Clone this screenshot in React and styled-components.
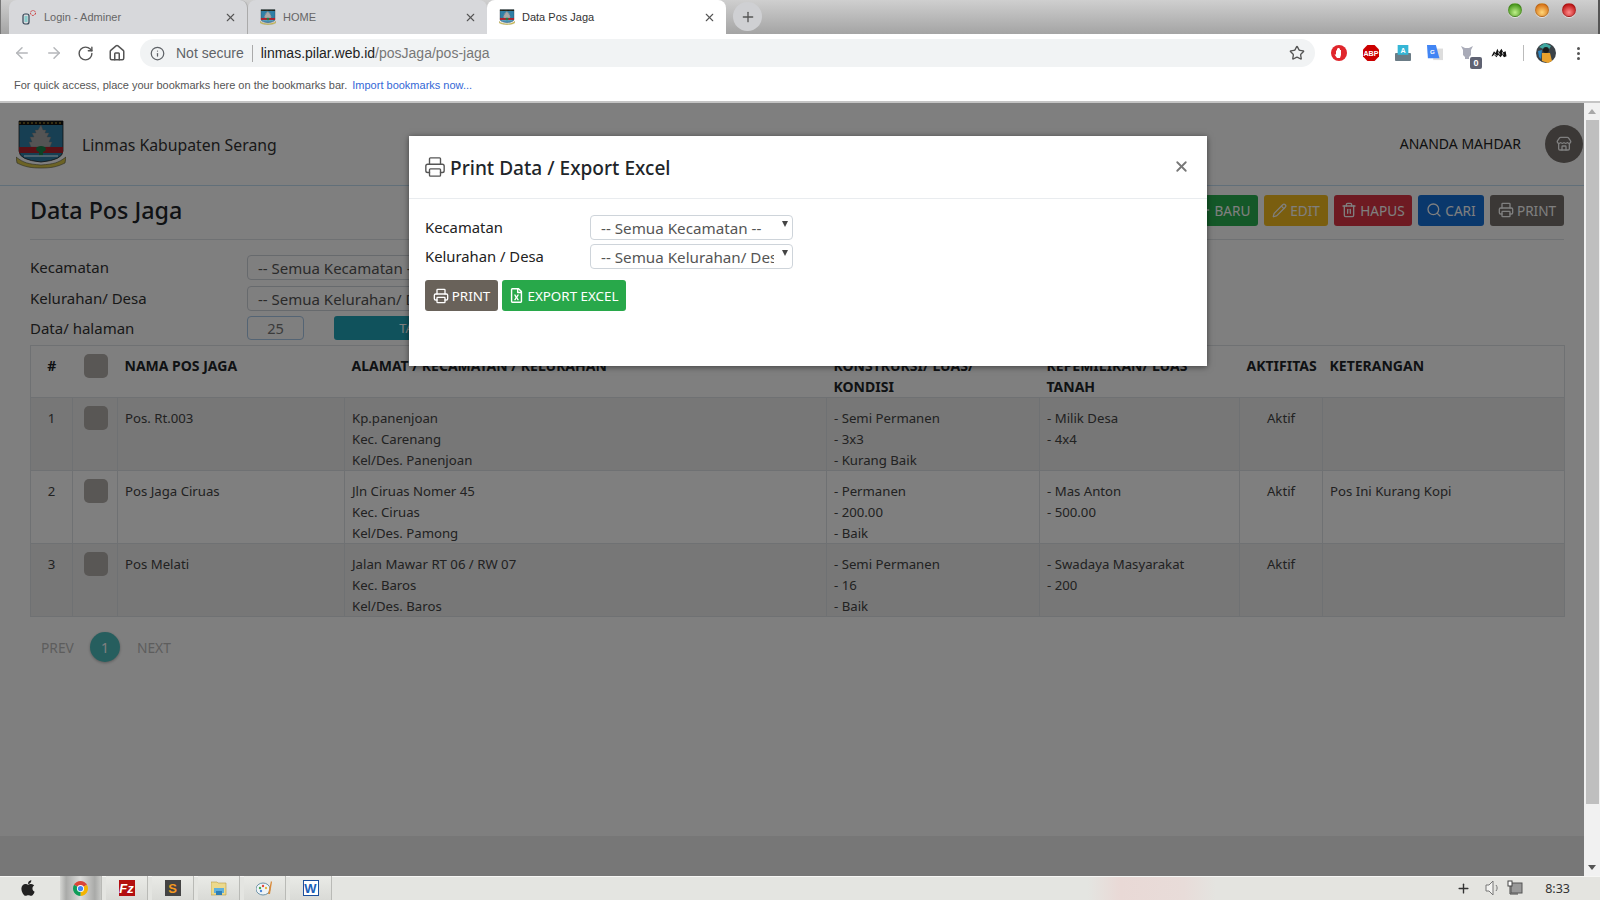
import React from 'react';
import styled, { createGlobalStyle } from 'styled-components';
import { ArrowLeft, ArrowRight, RotateCw, House, Info, Star, Plus, X, Printer, Pencil, Trash2, Search, Store } from 'lucide-react';
import { FaApple, FaRegFileExcel } from 'react-icons/fa';

const Global = createGlobalStyle`
  html, body { margin: 0; padding: 0; height: 100%; overflow: hidden; background: #fff; }
  * { box-sizing: border-box; }
  body { font-family: "Noto Sans", "Open Sans", sans-serif; color: #212529; }
`;
const UI = `"Liberation Sans", Arial, sans-serif`;

const Screen = styled.div`width: 1600px; height: 900px; display: flex; flex-direction: column; overflow: hidden;`;

/* Browser chrome */
const TabStrip = styled.div`height: 34px; display: flex; padding-left: 8px; background: linear-gradient(#cfcfcf, #a4a4a4); border-right: 2px solid #555; border-left: 1px solid #777; flex: none;`;
const Tab = styled.div`
  width: 239px; height: 34px; display: flex; align-items: center; padding: 0 10px 0 12px; gap: 7px;
  font: 11px ${UI}; color: ${p => p.$active ? '#333' : '#666'};
  background: ${p => p.$active ? '#fff' : '#d7d8db'};
  border-radius: 8px 8px 0 0;
  border-right: ${p => p.$divided ? '1px solid #aaa' : '0'};
  svg.close { margin-left: auto; color: #555; }
`;
const TabTitle = styled.span`flex: 1;`;
const NewTab = styled.div`width: 29px; height: 29px; margin: 2px 0 0 7px; border-radius: 50%; background: #cfd0d3; display: flex; align-items: center; justify-content: center; color: #555;`;
const Lights = styled.div`margin-left: auto; display: flex; gap: 13px; padding: 3px 22px 0 0;`;
const Light = styled.span`width: 14px; height: 14px; border-radius: 50%; background: radial-gradient(circle at 50% 70%, ${p => p.$a}, ${p => p.$b} 75%); border: 1px solid rgba(0,0,0,.15); box-shadow: 0 1px 0 rgba(255,255,255,.6);`;

const ToolBar = styled.div`height: 35px; background: #fff; display: flex; align-items: center; flex: none; padding-top: 3px;`;
const NavButtons = styled.div`width: 140px; flex: none; display: flex; align-items: center; gap: 14px; padding-left: 13px; color: #5f6368;`;
const NavIcon = styled.span`display: flex; color: ${p => p.$off ? '#b5b7ba' : '#555'};`;
const Omnibox = styled.div`width: 1175px; height: 28px; border-radius: 14px; background: #f1f3f4; display: flex; align-items: center; padding: 0 10px; font: 14px ${UI}; color: #5f6368;`;
const Secure = styled.span`margin-left: 11px; padding-right: 8px; border-right: 1px solid #aaa; line-height: 17px; font-size: 14px;`;
const Host = styled.span`margin-left: 8px; color: #222;`;
const UrlPath = styled.span`color: #777;`;
const OmniStar = styled.span`margin-left: auto; display: flex; color: #555;`;
const Extensions = styled.div`flex: 1; display: flex; align-items: center; position: relative; height: 28px; padding-left: 12px; gap: 8px;`;
const Ext = styled.span`width: 24px; height: 24px; display: flex; align-items: center; justify-content: center; position: relative;`;
const Badge = styled.span`position: absolute; right: -3px; bottom: -4px; width: 12px; height: 12px; border-radius: 2px; background: #5f6272; color: #fff; font: bold 9px/12px ${UI}; text-align: center;`;
const ExtDivider = styled.span`width: 1px; height: 16px; background: #bbb; margin-left: 4px; margin-right: 2px;`;
const Dots = styled.span`display: flex; flex-direction: column; gap: 2px; margin-left: 11px;`;
const Dot = styled.i`width: 3px; height: 3px; border-radius: 50%; background: #555; display: block;`;

const BookmarkBar = styled.div`height: 34px; background: #fff; border-bottom: 2px solid #c4c4c4; font: 11px ${UI}; color: #555; padding: 10px 0 0 14px; flex: none;`;
const BookmarkLink = styled.span`color: #3367d6; margin-left: 2px;`;

/* Page */
const PageArea = styled.div`flex: 1; min-height: 0; display: flex;`;
const Main = styled.div`flex: 1; min-width: 0; position: relative; display: flex; flex-direction: column; background: #fff;`;
const Scrollbar = styled.div`width: 16px; flex: none; background: #f1f1f1; display: flex; flex-direction: column; align-items: center; color: #888;`;
const ScrollArrow = styled.span`height: 17px; width: 16px; display: flex; align-items: center; justify-content: center;`;
const ArrowUp = styled.i`width: 0; height: 0; border: 4px solid transparent; border-top: 0; border-bottom: 5px solid #a8a8a8;`;
const ArrowDown = styled.i`width: 0; height: 0; border: 4px solid transparent; border-bottom: 0; border-top: 5px solid #555;`;
const Thumb = styled.div`width: 13px; height: 684px; background: #bfbfbf;`;
const ScrollSpace = styled.div`flex: 1;`;

const SiteHeader = styled.header`height: 83px; flex: none; display: flex; align-items: center; padding: 0 1px 0 16px; border-bottom: 1px solid #c3dff2;`;
const Brand = styled.span`margin: 2px 0 0 16px; font-size: 15.8px; color: #333;`;
const UserName = styled.span`margin: -2px 24px 0 auto; font-size: 14px; color: #222;`;
const Avatar = styled.span`width: 38px; height: 38px; border-radius: 50%; background: #76706c; color: #fff; display: flex; align-items: center; justify-content: center;`;

const Content = styled.div`flex: 1; padding: 0 20px 0 30px;`;
const TitleRow = styled.div`height: 54px; display: flex; align-items: center; gap: 6px; border-bottom: 1px solid #dee2e6;`;
const Title = styled.h1`margin: 0 auto 5px 0; font-size: 23.3px; font-weight: 500; color: #212529;`;
const Action = styled.button`
  height: 31px; border: 0; border-radius: 3px; padding: 0; margin-bottom: 5px;
  background: ${p => p.$bg}; color: ${p => p.$fg || '#fff'};
  display: inline-flex; align-items: center; justify-content: center; gap: 3px;
  font: 13.6px "Noto Sans", sans-serif; white-space: nowrap;
  width: ${p => p.$w}px;
`;
const FilterRow = styled.div`display: flex; align-items: center; height: ${p => p.$h}px; margin-top: ${p => p.$mt}px; gap: 30px;`;
const FilterLabel = styled.label`width: 217px; margin: ${p => p.$up ? '-2px' : '0'} -30px 0 0; flex: none; font-size: 15px; color: #333;`;
const FilterSelect = styled.div`width: 420px; height: 100%; border: 1px solid #ced4da; border-radius: 4px; color: #555; font-size: 15px; padding: 0 10px; display: flex; align-items: center;`;
const PerPage = styled.div`width: 57px; height: 100%; border: 1px solid #a8c8e8; border-radius: 4px; color: #777; font-size: 14.6px; display: flex; align-items: center; justify-content: center;`;
const ShowButton = styled.div`width: 202px; height: 100%; background: #20a4b8; color: #fff; border-radius: 3px; font-size: 13px; display: flex; align-items: center; justify-content: center;`;

const Table = styled.table`width: 1534px; table-layout: fixed; border-collapse: collapse; margin-top: 5px; font-size: 13.2px; color: #444; border: 1px solid #dee2e6;`;
const Th = styled.th`height: 51px; padding: 9px 7px 0; text-align: ${p => p.$center ? 'center' : 'left'}; vertical-align: top; font-weight: 700; font-size: 14px; line-height: 21px; color: #212529;`;
const Row = styled.tr`background: ${p => p.$odd ? '#eee' : 'transparent'}; height: 73px;`;
const Td = styled.td`padding: 10px 7px 0; border: 1px solid #dee2e6; vertical-align: top; line-height: 21px; height: 72px; text-align: ${p => p.$center ? 'center' : 'left'}; overflow: hidden;`;
const Line = styled.div`white-space: nowrap; &:last-child { margin-bottom: -1px; }`;
const Check = styled.span`display: block; width: 24px; height: 24px; margin: ${p => p.$head ? '-1px' : '-2px'} 0 0 4px; border-radius: 5px; background: #b3aeaa;`;

const Pager = styled.div`display: flex; align-items: center; height: 30px; margin: 15px 0 0 11px; font-size: 13.8px; color: #bbb;`;
const PageDot = styled.span`width: 30px; height: 30px; border-radius: 50%; background: #4dbdbd; color: #fff; display: flex; align-items: center; justify-content: center; margin: 0 17px 0 16px; box-shadow: 0 1px 3px rgba(0,0,0,.3);`;
const Footer = styled.footer`height: 40px; background: #eee; flex: none;`;

/* Modal */
const Backdrop = styled.div`position: absolute; inset: 0; background: rgba(0,0,0,.5);`;
const Modal = styled.div`position: absolute; left: 409px; top: 33px; width: 798px; height: 230px; background: #fff; box-shadow: 0 1px 6px rgba(0,0,0,.5);`;
const ModalHead = styled.div`height: 63px; display: flex; align-items: center; padding: 0 17px 0 15px; border-bottom: 1px solid #e9ecef; gap: 4px; color: #555;`;
const ModalTitle = styled.h2`margin: 2px 0 0; font-size: 19.1px; font-weight: 500; color: #212529;`;
const CloseX = styled.span`margin: -2px 0 0 auto; color: #777; display: flex;`;
const ModalBody = styled.div`padding: 16px 16px 0;`;
const FormRow = styled.div`display: flex; align-items: center; height: 25px; margin-bottom: 4px;`;
const FormLabel = styled.label`width: 165px; margin-top: -2px; flex: none; font-size: 14.8px; color: #222;`;
const SelectWrap = styled.div`
  position: relative; width: 203px; height: 25px;
  &::after { content: ''; position: absolute; right: 5px; top: 6px; border: 3.5px solid transparent; border-bottom: 0; border-top: 6px solid #444; pointer-events: none; }
`;
const Select = styled.select`
  width: 100%; height: 100%; appearance: none; border: 1px solid #ced4da; border-radius: 4px; background: #fff;
  color: #555; font: 15.2px "Noto Sans", sans-serif; padding: 0 18px 0 10px; outline: 0;
`;
const ModalActions = styled.div`display: flex; gap: 4px; margin-top: 11px;`;
const ModalButton = styled.button`
  height: 31px; width: ${p => p.$w}px; border: 0; border-radius: 3px; background: ${p => p.$bg}; color: #fff;
  display: inline-flex; align-items: center; justify-content: center; gap: 3px; font: 13.4px "Noto Sans", sans-serif; padding: 0;
`;

/* Taskbar */
const Taskbar = styled.div`height: 24px; flex: none; display: flex; align-items: stretch; background: linear-gradient(90deg, #e4e5e1 0 68%, #e9d9d6 70%, #e8dcd9 74%, #e4e4e0 76%); box-shadow: inset 0 1px 0 #f6f6f4;`;
const StartCell = styled.div`width: 60px; padding-right: 4px; display: flex; align-items: center; justify-content: center; color: #222;`;
const TaskCell = styled.div`
  width: 42px; margin-right: 4px; display: flex; align-items: center; justify-content: center;
  background: ${p => p.$on ? 'linear-gradient(90deg,#d5d6d3,#a9aaa8 15%,#dcdcda 50%,#a9aaa8 85%,#c8c9c6)' : 'linear-gradient(#eaebe7,#d9dad6)'};
  border-right: 1px solid #b9bab6;
`;
const Tray = styled.div`margin-left: auto; display: flex; align-items: center; padding-right: 30px; color: #333;`;
const Clock = styled.span`font-size: 12.5px; margin-left: 22px; color: #333;`;
const TrayIcon = styled.span`display: flex; margin-left: ${p => p.$ml || 0}px;`;

const Crest = ({ size = 50 }) => (
  <svg width={size} height={size} viewBox="0 0 50 50" style={{ flex: 'none' }}>
    <path d="M3 2h44v30q0 9-22 11Q3 41 3 32z" fill="#2f7fa6" stroke="#222" strokeWidth=".8" />
    <rect x="3" y="2" width="44" height="4" fill="#111" />
    <path d="M3 4h44" stroke="#c9a93a" strokeDasharray="2 2" strokeWidth="1" />
    <path d="M25 6l2 5h3l-1 3h4l-2 4h4l-2 5h3l-2 5H15l-2-5h3l-2-5h4l-2-4h4l-1-3h3z" fill="#a8a8a8" stroke="#777" strokeWidth=".4" />
    <rect x="3" y="28" width="44" height="6" fill="#b3202a" />
    <path d="M25 27c5 0 7 4 2 6v4h-4v-4c-5-2-3-6 2-6z" fill="#17824a" />
    <path d="M8 37h34" stroke="#bde" strokeWidth="1.500" />
    <path d="M0 38c8 6 12 7 25 8 13-1 17-2 25-8l-1 6c-8 4-14 5-24 5S9 48 1 44z" fill="#d8c64a" stroke="#554" strokeWidth=".6" />
  </svg>
);

const Hand = () => (
  <svg width="16" height="16" viewBox="0 0 16 16"><circle cx="8" cy="8" r="8" fill="#e0262c" /><path d="M5 5.500h1V3.500h1V3h1v.5h1V5h1v5l-1 3H6L3.500 9.500 5 9.500z" fill="#fff" /></svg>
);
const Abp = () => (
  <svg width="16" height="16" viewBox="0 0 18 18"><path d="M5 0h8l5 5v8l-5 5H5l-5-5V5z" fill="#c00" /><text x="9" y="12" textAnchor="middle" fontFamily="Liberation Sans" fontWeight="bold" fontSize="8" fill="#fff">ABP</text></svg>
);
const Keys = () => (
  <svg width="16" height="16" viewBox="0 0 18 18"><rect y="9" width="18" height="9" rx="1" fill="#6b7c86" /><rect x="3" y="0" width="12" height="11" fill="#35b6d6" /><text x="9" y="9" textAnchor="middle" fontFamily="Liberation Sans" fontWeight="bold" fontSize="8" fill="#fff">A</text></svg>
);
const Translate = () => (
  <svg width="16" height="16" viewBox="0 0 18 18"><rect x="7" y="4" width="11" height="13" fill="#ddd" /><path d="M0 0h10l4 15H1z" fill="#4285f4" /><text x="6" y="10" textAnchor="middle" fontFamily="Liberation Sans" fontWeight="bold" fontSize="7" fill="#fff">G</text></svg>
);
const Bats = () => (
  <svg width="16" height="10" viewBox="0 0 18 12"><path d="M0 10l3-6 2 2 2-5 2 4 3-4 2 4 3-1 1 6-3 1-2-3-2 3-3-3-2 3-3-3-2 2z" fill="#111" /><path d="M3 7l3 2M8 5l2 3M13 5l1 3" stroke="#fff" /></svg>
);
const Parrot = () => (
  <svg width="20" height="20" viewBox="0 0 20 20"><circle cx="10" cy="10" r="10" fill="#3a4248" /><path d="M3 4l6-4 6 3-3 5z" fill="#3fa7a0" /><path d="M6 10h8l2 8-4 2-6-2z" fill="#e8a12d" /><path d="M2 8l4-1-1 9-2-2z" fill="#2e86c1" /><circle cx="10" cy="7" r="3" fill="#1c1c1c" /></svg>
);
const ChromeLogo = () => (
  <svg width="15" height="15" viewBox="0 0 16 16"><path d="M8 8L1.100 4A8 8 0 0 1 14.900 4z" fill="#db4437" /><path d="M8 8l6.900-4A8 8 0 0 1 8 16z" fill="#f4b400" /><path d="M8 8v8A8 8 0 0 1 1.100 4z" fill="#0f9d58" /><circle cx="8" cy="8" r="3.800" fill="#fff" /><circle cx="8" cy="8" r="2.800" fill="#4285f4" /></svg>
);
const Square = styled.span`width: 16px; height: 16px; display: flex; align-items: center; justify-content: center; background: ${p => p.$bg}; color: ${p => p.$fg}; font: ${p => p.$font}; border: ${p => p.$border || '0'};`;
const Folder = () => (
  <svg width="16" height="16" viewBox="0 0 16 16"><path d="M0 2h6l1 1h8v12H0z" fill="#ecd98b" stroke="#b89b45" strokeWidth=".6" /><rect x="3" y="8" width="10" height="5" fill="#5fb0dc" /><rect x="5" y="11" width="6" height="4" fill="#2f7fb5" /></svg>
);
const Palette = () => (
  <svg width="18" height="16" viewBox="0 0 18 16"><ellipse cx="7" cy="9" rx="7" ry="6" fill="#eef3f6" stroke="#6d93a8" /><circle cx="4" cy="8" r="1.200" fill="#4aa84a" /><circle cx="7" cy="6" r="1.200" fill="#e2453a" /><circle cx="10" cy="8" r="1.200" fill="#e9b73f" /><circle cx="5" cy="11" r="1.200" fill="#4a86d8" /><path d="M15 1l1 1-2 12h-2z" fill="#d98a3a" /></svg>
);
const Speaker = () => (
  <svg width="14" height="16" viewBox="0 0 14 16" fill="#f2f2f0" stroke="#777"><path d="M1 5h3l4-4v14l-4-4H1z" /><path d="M11 5c1.500 2 1.500 4 0 6" fill="none" /></svg>
);
const Network = () => (
  <svg width="16" height="16" viewBox="0 0 16 16"><rect x="4" y="3" width="11" height="10" fill="#999" stroke="#555" /><rect x="1" y="1" width="4" height="5" fill="#fff" stroke="#444" /><path d="M3 6v8h8" fill="none" stroke="#444" /></svg>
);

const rows = [
  { no: 1, name: 'Pos. Rt.003', addr: ['Kp.panenjoan', 'Kec. Carenang', 'Kel/Des. Panenjoan'], kons: ['- Semi Permanen', '- 3x3', '- Kurang Baik'], own: ['- Milik Desa', '- 4x4'], note: '' },
  { no: 2, name: 'Pos Jaga Ciruas', addr: ['Jln Ciruas Nomer 45', 'Kec. Ciruas', 'Kel/Des. Pamong'], kons: ['- Permanen', '- 200.00', '- Baik'], own: ['- Mas Anton', '- 500.00'], note: 'Pos Ini Kurang Kopi' },
  { no: 3, name: 'Pos Melati', addr: ['Jalan Mawar RT 06 / RW 07', 'Kec. Baros', 'Kel/Des. Baros'], kons: ['- Semi Permanen', '- 16', '- Baik'], own: ['- Swadaya Masyarakat', '- 200'], note: '' },
];
const Lines = ({ items }) => items.map(t => <Line key={t}>{t}</Line>);

export default function App() {
  return (
    <Screen>
      <Global />
      <TabStrip>
        <Tab $divided>
          <svg width="16" height="16" viewBox="0 0 16 16" style={{ flex: 'none' }}><rect x="2" y="5" width="6" height="10" rx="2" fill="none" stroke="#345" strokeWidth="1.200" /><rect x="3.500" y="7" width="3" height="6" fill="#8cc" /><circle cx="12" cy="4" r="2.500" fill="none" stroke="#c33" strokeDasharray="2 1" /></svg>
          <TabTitle>Login - Adminer</TabTitle>
          <X className="close" size={13} />
        </Tab>
        <Tab>
          <Crest size={16} />
          <TabTitle>HOME</TabTitle>
          <X className="close" size={13} />
        </Tab>
        <Tab $active>
          <Crest size={16} />
          <TabTitle>Data Pos Jaga</TabTitle>
          <X className="close" size={13} />
        </Tab>
        <NewTab><Plus size={16} /></NewTab>
        <Lights>
          <Light $a="#bff08a" $b="#4c9a20" />
          <Light $a="#ffd77a" $b="#d9761a" />
          <Light $a="#ff8a8a" $b="#c01818" />
        </Lights>
      </TabStrip>

      <ToolBar>
        <NavButtons>
          <NavIcon $off><ArrowLeft size={18} /></NavIcon>
          <NavIcon $off><ArrowRight size={18} /></NavIcon>
          <NavIcon><RotateCw size={17} /></NavIcon>
          <NavIcon><House size={18} /></NavIcon>
        </NavButtons>
        <Omnibox>
          <Info size={15} />
          <Secure>Not secure</Secure>
          <Host>linmas.pilar.web.id<UrlPath>/posJaga/pos-jaga</UrlPath></Host>
          <OmniStar><Star size={16} /></OmniStar>
        </Omnibox>
        <Extensions>
          <Ext><Hand /></Ext>
          <Ext><Abp /></Ext>
          <Ext><Keys /></Ext>
          <Ext><Translate /></Ext>
          <Ext>
            <svg width="16" height="16" viewBox="0 0 16 16"><path d="M2 1l4 2h4l4-2-2 4v5l-2 2v2H6v-2l-2-2V5z" fill="#a9abb8" /></svg>
            <Badge>0</Badge>
          </Ext>
          <Ext><Bats /></Ext>
          <ExtDivider />
          <Ext><Parrot /></Ext>
          <Dots><Dot /><Dot /><Dot /></Dots>
        </Extensions>
      </ToolBar>

      <BookmarkBar>
        For quick access, place your bookmarks here on the bookmarks bar. <BookmarkLink>Import bookmarks now...</BookmarkLink>
      </BookmarkBar>

      <PageArea>
        <Main>
          <SiteHeader>
            <Crest />
            <Brand>Linmas Kabupaten Serang</Brand>
            <UserName>ANANDA MAHDAR</UserName>
            <Avatar><Store size={16} /></Avatar>
          </SiteHeader>
          <Content>
            <TitleRow>
              <Title>Data Pos Jaga</Title>
              <Action $bg="#28b050" $w={70}><Plus size={16} />BARU</Action>
              <Action $bg="#f5bd1f" $w={64}><Pencil size={15} />EDIT</Action>
              <Action $bg="#dc3545" $w={78}><Trash2 size={16} />HAPUS</Action>
              <Action $bg="#1470d8" $w={66}><Search size={16} />CARI</Action>
              <Action $bg="#76706c" $w={74}><Printer size={16} />PRINT</Action>
            </TitleRow>
            <FilterRow $h={25} $mt={15}>
              <FilterLabel $up>Kecamatan</FilterLabel>
              <FilterSelect>-- Semua Kecamatan --</FilterSelect>
            </FilterRow>
            <FilterRow $h={25} $mt={6}>
              <FilterLabel $up>Kelurahan/ Desa</FilterLabel>
              <FilterSelect>-- Semua Kelurahan/ Desa --</FilterSelect>
            </FilterRow>
            <FilterRow $h={24} $mt={5}>
              <FilterLabel>Data/ halaman</FilterLabel>
              <PerPage>25</PerPage>
              <ShowButton>TAMPILKAN</ShowButton>
            </FilterRow>
            <Table>
              <colgroup>
                {[42, 45, 227, 482, 213, 200, 83, 242].map((w, i) => <col key={i} style={{ width: w }} />)}
              </colgroup>
              <thead>
                <tr>
                  <Th $center>#</Th>
                  <Th><Check $head /></Th>
                  <Th>NAMA POS JAGA</Th>
                  <Th>ALAMAT / KECAMATAN / KELURAHAN</Th>
                  <Th>KONSTRUKSI/ LUAS/ KONDISI</Th>
                  <Th>KEPEMILIKAN/ LUAS TANAH</Th>
                  <Th>AKTIFITAS</Th>
                  <Th>KETERANGAN</Th>
                </tr>
              </thead>
              <tbody>
                {rows.map(r => (
                  <Row key={r.no} $odd={r.no % 2 === 1}>
                    <Td $center>{r.no}</Td>
                    <Td><Check /></Td>
                    <Td>{r.name}</Td>
                    <Td><Lines items={r.addr} /></Td>
                    <Td><Lines items={r.kons} /></Td>
                    <Td><Lines items={r.own} /></Td>
                    <Td $center>Aktif</Td>
                    <Td>{r.note}</Td>
                  </Row>
                ))}
              </tbody>
            </Table>
            <Pager>
              <span>PREV</span>
              <PageDot>1</PageDot>
              <span>NEXT</span>
            </Pager>
          </Content>
          <Footer />
          <Backdrop />
          <Modal>
            <ModalHead>
              <Printer size={22} strokeWidth={1.5} />
              <ModalTitle>Print Data / Export Excel</ModalTitle>
              <CloseX><X size={17} strokeWidth={2.6} /></CloseX>
            </ModalHead>
            <ModalBody>
              <FormRow>
                <FormLabel>Kecamatan</FormLabel>
                <SelectWrap><Select defaultValue="a"><option value="a">-- Semua Kecamatan --</option></Select></SelectWrap>
              </FormRow>
              <FormRow>
                <FormLabel>Kelurahan / Desa</FormLabel>
                <SelectWrap><Select defaultValue="a"><option value="a">-- Semua Kelurahan/ Desa --</option></Select></SelectWrap>
              </FormRow>
              <ModalActions>
                <ModalButton $bg="#69625a" $w={73}><Printer size={16} />PRINT</ModalButton>
                <ModalButton $bg="#28a84a" $w={124}><FaRegFileExcel size={15} />EXPORT EXCEL</ModalButton>
              </ModalActions>
            </ModalBody>
          </Modal>
        </Main>
        <Scrollbar>
          <ScrollArrow><ArrowUp /></ScrollArrow>
          <Thumb />
          <ScrollSpace />
          <ScrollArrow><ArrowDown /></ScrollArrow>
        </Scrollbar>
      </PageArea>

      <Taskbar>
        <StartCell><FaApple size={18} /></StartCell>
        <TaskCell $on><ChromeLogo /></TaskCell>
        <TaskCell><Square $bg="#b30f0f" $fg="#fff" $font={`italic bold 13px ${UI}`}>Fz</Square></TaskCell>
        <TaskCell><Square $bg="#444" $fg="#f79a1e" $font={`bold 13px ${UI}`}>S</Square></TaskCell>
        <TaskCell><Folder /></TaskCell>
        <TaskCell><Palette /></TaskCell>
        <TaskCell><Square $bg="#fff" $fg="#1b5fb8" $font={`bold 13px ${UI}`} $border="1px solid #1b4f9c">W</Square></TaskCell>
        <Tray>
          <Plus size={15} strokeWidth={2.2} />
          <TrayIcon $ml={14}><Speaker /></TrayIcon>
          <TrayIcon $ml={8}><Network /></TrayIcon>
          <Clock>8:33</Clock>
        </Tray>
      </Taskbar>
    </Screen>
  );
}
